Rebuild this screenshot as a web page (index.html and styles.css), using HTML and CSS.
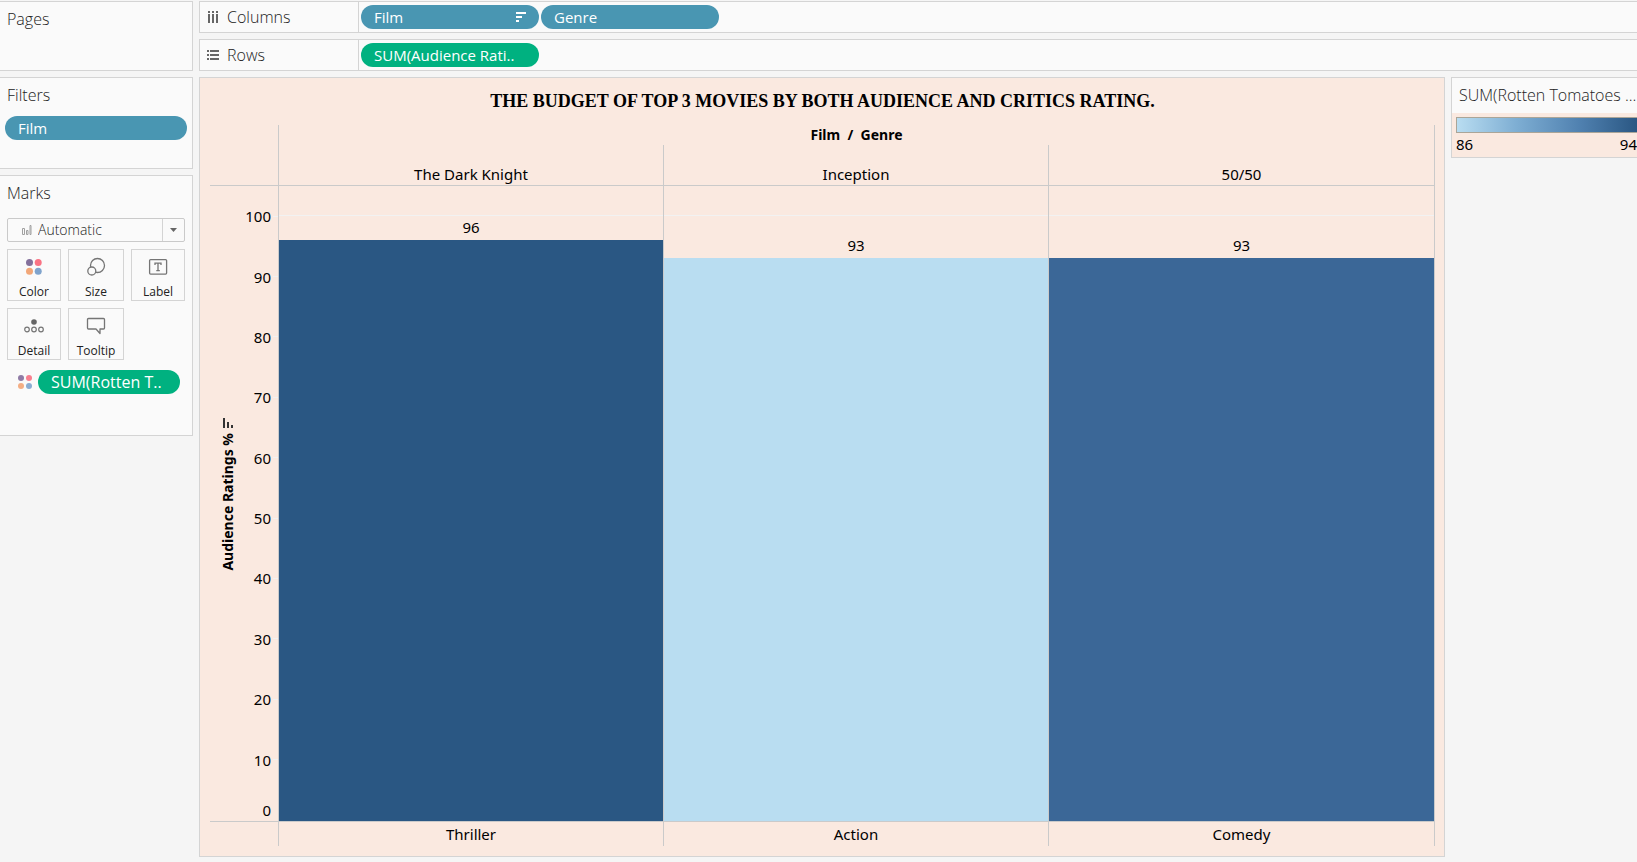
FILE: index.html
```html
<!DOCTYPE html>
<html lang="en">
<head>
<meta charset="utf-8">
<meta name="viewport" content="width=device-width, initial-scale=1">
<title>Top movies worksheet</title>
<link rel="stylesheet" href="styles.css">
</head>
<body>
<div class="workspace">
  <aside class="sidebar">
    <section class="card card-pages"><h2 class="card-title">Pages</h2></section>
    <section class="card card-filters">
      <h2 class="card-title">Filters</h2>
      <button class="pill pill-blue pill-filter" type="button">Film</button>
    </section>
    <section class="card card-marks">
      <h2 class="card-title"><label for="mark-type">Marks</label></h2>
      <div class="mark-type">
        <svg class="bars-icon" width="12" height="12" viewBox="0 0 12 12" fill="none" stroke="#a0a0a0"><path d="M1.500 4.500h2v6h-2zM5.500 6.500h1.500v4h-1.500zM9 10.500V1.500h1v9z"/></svg>
        <select id="mark-type" class="mark-select"><option>Automatic</option></select>
        <svg class="caret" width="22" height="22" viewBox="0 0 22 22"><path d="M0.500 0v22" stroke="#d4d4d4"/><path d="M8 9h7l-3.500 4z" fill="#666"/></svg>
      </div>
      <div class="mark-buttons">
        <button class="mark-button" type="button">
          <svg width="20" height="20" viewBox="0 0 20 20"><circle cx="5.500" cy="5.500" r="3.500" fill="#83709b"/><circle cx="14.200" cy="5.500" r="3.500" fill="#f97384"/><circle cx="5.500" cy="14.200" r="3.500" fill="#f2a778"/><circle cx="14.200" cy="14.200" r="3.500" fill="#7fa3cc"/></svg>
          Color</button>
        <button class="mark-button" type="button">
          <svg width="20" height="20" viewBox="0 0 20 20" stroke="#757575" stroke-width="1.300" fill="none"><circle cx="11.500" cy="8.500" r="7"/><circle cx="5.800" cy="14" r="4" fill="#fafafa"/></svg>
          Size</button>
        <button class="mark-button" type="button">
          <svg width="20" height="20" viewBox="0 0 20 20" fill="none" stroke="#757575" stroke-width="1.300"><rect x="1.600" y="2.600" width="17" height="14.500" rx="1"/><path d="M7 8V6.200h6V8M10 6.200v7.500M8.300 13.700h3.500"/></svg>
          Label</button>
        <button class="mark-button" type="button">
          <svg width="20" height="20" viewBox="0 0 20 20" fill="none" stroke="#757575" stroke-width="1.200"><circle cx="10" cy="6" r="2.800" fill="#666" stroke="none"/><circle cx="3" cy="13.500" r="2.300"/><circle cx="10" cy="13.500" r="2.300"/><circle cx="17" cy="13.500" r="2.300"/></svg>
          Detail</button>
        <button class="mark-button" type="button">
          <svg width="20" height="20" viewBox="0 0 20 20" fill="none" stroke="#757575" stroke-width="1.300" stroke-linejoin="round"><path d="M2.500 2.500h15a1 1 0 0 1 1 1v8.500a1 1 0 0 1-1 1h-3.500v4.500l-4-4.500h-7.500a1 1 0 0 1-1-1V3.500a1 1 0 0 1 1-1z"/></svg>
          Tooltip</button>
      </div>
      <div class="encoding">
        <svg width="16" height="16" viewBox="0 0 16 16"><circle cx="4" cy="4" r="3" fill="#8f7ba5"/><circle cx="12" cy="4" r="3" fill="#f97f8f"/><circle cx="4" cy="12" r="3" fill="#f4ae84"/><circle cx="12" cy="12" r="3" fill="#8badd3"/></svg>
        <button class="pill pill-green pill-encoding" type="button">SUM(Rotten T..</button>
      </div>
    </section>
  </aside>

  <main class="sheet">
    <section class="shelf">
      <h2 class="shelf-label"><svg width="12" height="12" viewBox="0 0 12 12" fill="#666"><path d="M1 0h2v2H1zM5 0h2v2H5zM9 0h2v2H9zM1 3h2v9H1zM5 3h2v9H5zM9 3h2v9H9z"/></svg>Columns</h2>
      <button class="pill pill-blue pill-shelf" type="button">Film<svg width="10" height="10" viewBox="0 0 10 10" fill="#fff"><path d="M0 0h10v2H0zM0 4h6v2H0zM0 8h3v2H0z"/></svg></button>
      <button class="pill pill-blue pill-shelf" type="button">Genre</button>
    </section>
    <section class="shelf">
      <h2 class="shelf-label"><svg width="12" height="12" viewBox="0 0 12 12" fill="#666"><path d="M0 1h2v2H0zM0 5h2v2H0zM0 9h2v2H0zM3 1h9v2H3zM3 5h9v2H3zM3 9h9v2H3z"/></svg>Rows</h2>
      <button class="pill pill-green pill-shelf" type="button">SUM(Audience Rati..</button>
    </section>

    <div class="view">
      <section class="viz">
        <h1 class="viz-title">THE BUDGET OF TOP 3 MOVIES BY BOTH AUDIENCE AND CRITICS RATING.</h1>
        <div class="chart">
          <div class="axis">
            <div class="axis-title">
              <svg width="12" height="12" viewBox="0 0 12 12" fill="#333"><path d="M1 1h2v10H1zM5 5h2v6H5zM9 8h2v3H9z"/></svg>
              <span class="axis-name">Audience Ratings %</span>
            </div>
            <div class="ticks">
              <span class="tick">100</span><span class="tick">90</span><span class="tick">80</span><span class="tick">70</span><span class="tick">60</span><span class="tick">50</span><span class="tick">40</span><span class="tick">30</span><span class="tick">20</span><span class="tick">10</span><span class="tick tick-zero">0</span>
            </div>
          </div>
          <div class="panes">
            <div class="field-label">Film&nbsp; /&nbsp; Genre</div>
            <div class="columns">
              <div class="column">
                <div class="film">The Dark Knight</div>
                <div class="plot"><span class="value">96</span><div class="bar bar-dark" style="height:91.5%"></div></div>
                <div class="genre">Thriller</div>
              </div>
              <div class="column">
                <div class="film">Inception</div>
                <div class="plot"><span class="value">93</span><div class="bar bar-light" style="height:88.6%"></div></div>
                <div class="genre">Action</div>
              </div>
              <div class="column">
                <div class="film">50/50</div>
                <div class="plot"><span class="value">93</span><div class="bar bar-mid" style="height:88.6%"></div></div>
                <div class="genre">Comedy</div>
              </div>
            </div>
          </div>
        </div>
      </section>
      <aside class="legend">
        <h2 class="legend-title">SUM(Rotten Tomatoes ...</h2>
        <div class="legend-body">
          <div class="ramp"></div>
          <div class="ramp-labels"><span>86</span><span>94</span></div>
        </div>
      </aside>
    </div>
  </main>
</div>
</body>
</html>
```
FILE: styles.css
```css
* { box-sizing: border-box; }

body {
  margin: 0;
  background: #f5f5f5;
  color: #222;
  font: 15px/20px "Open Sans", "Noto Sans", sans-serif;
}

h1, h2 { margin: 0; font-size: inherit; font-weight: inherit; }
svg { flex: none; }
button, select { font: inherit; color: inherit; }

.workspace {
  display: flex;
  gap: 6px;
  min-height: 100vh;
  padding: 1px 0 5px;
  overflow: hidden;
}

.sidebar { flex: none; width: 193px; display: flex; flex-direction: column; gap: 6px; }

.card { background: #fafafa; border: 1px solid #d4d4d4; border-left: 0; }
.card-title { padding: 7px 7px 9px; font-weight: 300; }
.card-pages { min-height: 70px; }
.card-filters { min-height: 92px; }
.card-marks { min-height: 261px; }

.pill {
  display: flex;
  align-items: center;
  justify-content: space-between;
  height: 24px;
  padding: 0 13px;
  border: 0;
  border-radius: 12px;
  color: #fff;
  white-space: nowrap;
}
.pill-blue { background: #4996b2; }
.pill-green { background: #00b180; }
.pill-filter { width: 182px; margin: 2px 5px; }
.pill-shelf { width: 178px; }
.pill-encoding { flex: none; width: 142px; font-size: 16px; }

.mark-type {
  display: flex;
  align-items: center;
  height: 24px;
  margin: 6px 7px 7px;
  width: 178px;
  border: 1px solid #cacaca;
  border-radius: 2px;
  padding-left: 13px;
}
.mark-select {
  flex: 1;
  min-width: 0;
  height: 22px;
  padding: 0 5px;
  border: 0;
  background: none;
  appearance: none;
  font-size: 14px;
  font-weight: 300;
}

.mark-buttons {
  display: grid;
  grid-template-columns: 54px 56px 54px;
  gap: 7px;
  padding: 0 7px;
}
.mark-button {
  display: flex;
  flex-direction: column;
  align-items: center;
  gap: 5px;
  height: 52px;
  padding: 7px 0 0;
  border: 1px solid #d4d4d4;
  background: #fafafa;
  font-size: 12px;
}
.encoding { display: flex; align-items: center; gap: 5px; padding: 10px 0 10px 17px; }

.sheet { flex: 1; min-width: 0; display: flex; flex-direction: column; gap: 6px; }

.shelf {
  display: flex;
  align-items: center;
  gap: 2px;
  height: 32px;
  border: 1px solid #d4d4d4;
  border-right: 0;
  background: #fafafa;
}
.shelf-label {
  display: flex;
  align-items: center;
  gap: 8px;
  width: 159px;
  height: 30px;
  padding-left: 7px;
  border-right: 1px solid #d4d4d4;
}
.card-title, .shelf-label, .legend-title { font-size: 16px; font-weight: 300; }

.view { flex: 1; display: flex; align-items: flex-start; gap: 6px; }

.viz {
  flex: 1;
  align-self: stretch;
  display: flex;
  flex-direction: column;
  padding: 0 9px 10px 10px;
  border: 1px solid #d4d4d4;
  background: #fae9e0;
  color: #000;
  font-family: "Noto Sans", "Open Sans", sans-serif;
  font-size: 15px;
}
.viz-title {
  height: 47px;
  padding-top: 11px;
  text-align: center;
  font: bold 18px/24px "Liberation Serif", serif;
}

.chart { flex: 1; display: flex; }
.axis {
  display: flex;
  justify-content: space-between;
  width: 68px;
  margin: 60px 0 24px;
  border: solid #cacaca;
  border-width: 1px 0;
}
.axis-title {
  display: flex;
  flex-direction: column;
  align-items: center;
  justify-content: center;
  gap: 4px;
  width: 36px;
  padding-bottom: 20px;
}
.axis-name {
  writing-mode: vertical-rl;
  transform: rotate(180deg);
  font-size: 14px;
  font-weight: bold;
}
.ticks { display: flex; flex-direction: column; padding-bottom: 1px; }
.tick {
  flex: 2;
  display: flex;
  align-items: center;
  justify-content: flex-end;
  gap: 2px;
}
.tick::after { content: ""; width: 5px; height: 1px; background: #f2f2f2; }
.tick-zero { flex: 1; align-items: flex-end; }
.tick-zero::after { visibility: hidden; }

.panes {
  flex: 1;
  display: flex;
  flex-direction: column;
  border: solid #cacaca;
  border-width: 0 1px;
}
.field-label { height: 20px; text-align: center; font-size: 14px; font-weight: bold; }
.columns { flex: 1; display: grid; grid-template-columns: repeat(3, 1fr); }
.column { display: flex; flex-direction: column; text-align: center; }
.column:not(:last-child) { border-right: 1px solid #cacaca; }
.film { height: 41px; padding-top: 19px; border-bottom: 1px solid #cacaca; }
.plot {
  flex: 1;
  display: flex;
  flex-direction: column;
  justify-content: flex-end;
  border-bottom: 1px solid #cacaca;
  background: linear-gradient(#f2f2f2, #f2f2f2) 0 4.6% / 100% 1px no-repeat;
}
.value { padding-bottom: 3px; }
.bar { flex: none; }
.bar-dark { background: #2a5783; }
.bar-light { background: #b9ddf1; }
.bar-mid { background: #3b6797; }
.genre { height: 24px; padding-top: 2px; }

.legend {
  flex: none;
  width: 186px;
  border: 1px solid #d4d4d4;
  border-right: 0;
  background: #fae9e0;
  overflow: hidden;
  white-space: nowrap;
}
.legend-title { height: 35px; padding: 7px; background: #fafafa; }
.legend-body { padding: 4px 0 3px 4px; color: #000; font-family: "Noto Sans", sans-serif; }
.ramp {
  height: 16px;
  border: 1px solid #aaa598;
  border-right: 0;
  background: linear-gradient(90deg, #b9ddf1, #7eaed3 33%, #5081b0 68%, #2a5783);
}
.ramp-labels { display: flex; justify-content: space-between; padding-top: 1px; }
```
